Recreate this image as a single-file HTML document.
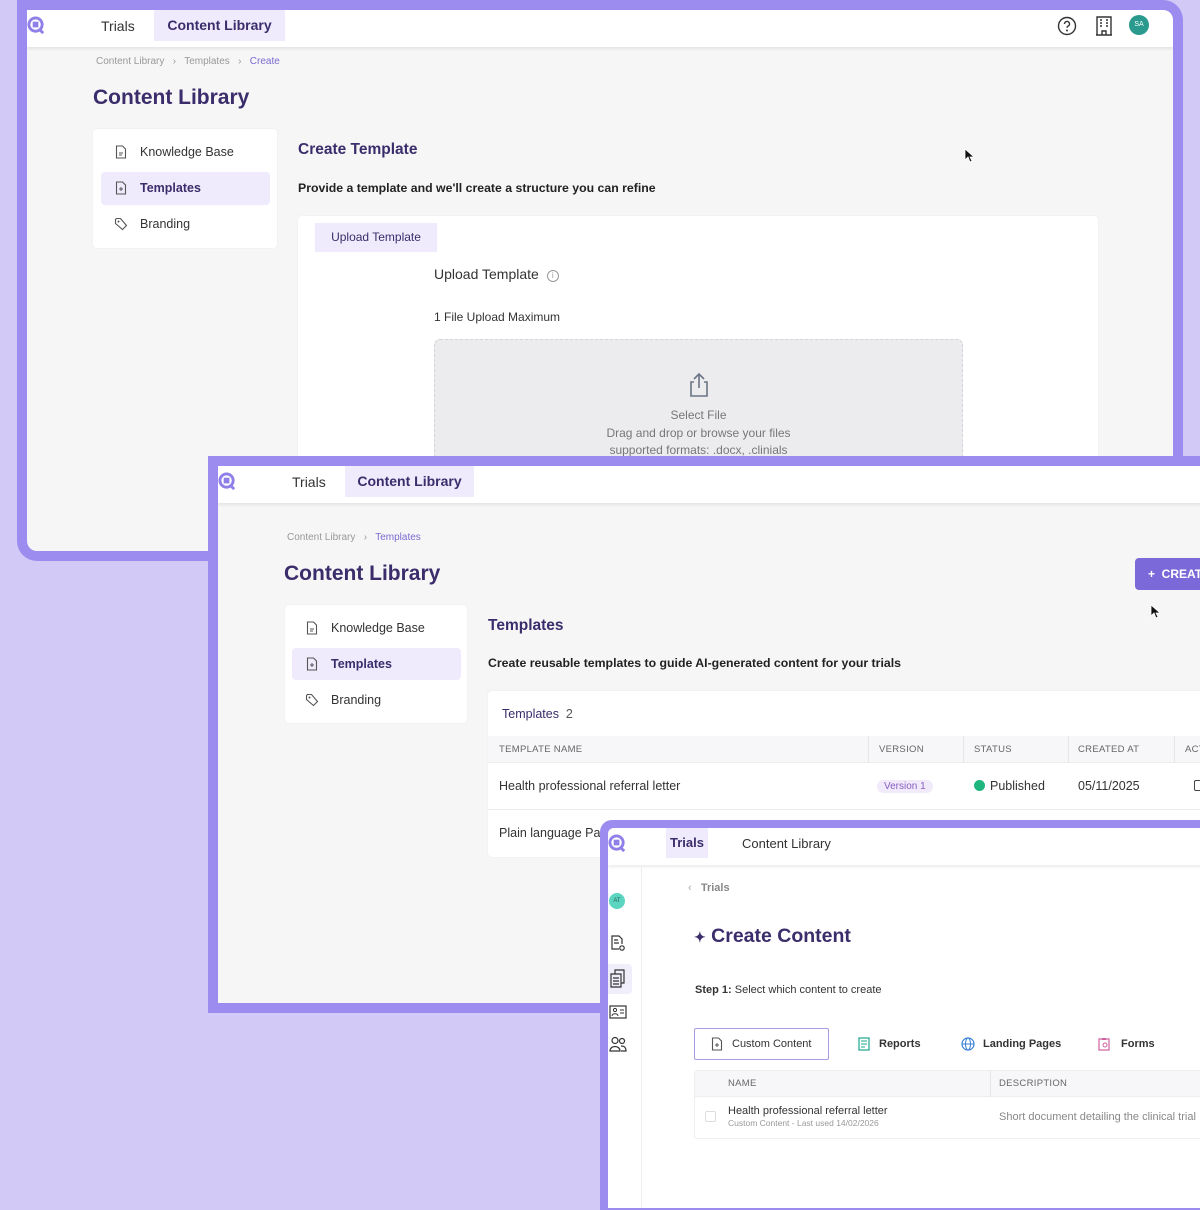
<!DOCTYPE html>
<html><head><meta charset="utf-8"><style>
*{box-sizing:border-box;margin:0;padding:0}
body{width:1200px;height:1200px;overflow:hidden;background:#d2c9f6;font-family:"Liberation Sans",sans-serif;position:relative;color:#333}
.a{position:absolute;white-space:nowrap}
.frame{position:absolute;background:#9c8cf0;overflow:hidden}
.inner{position:absolute;background:#f6f6f7;overflow:hidden}
.nav{position:absolute;left:0;top:0;right:0;height:37px;background:#fff;box-shadow:0 2px 3px rgba(0,0,0,.08)}
.tab{position:absolute;top:0;height:31px;background:#efebfc;color:#3b2d6b;font-weight:bold;font-size:14px;line-height:31px;text-align:center}
.h1{font-size:21px;font-weight:bold;color:#3b2d6b}
.card{position:absolute;background:#fff;border-radius:4px;box-shadow:0 0 2px rgba(0,0,0,.06)}
.side{font-size:12.5px;color:#333}
.sel{position:absolute;background:#efebfc;border-radius:4px}
.bc{font-size:10px;color:#999}
.th{font-size:9.5px;color:#666;letter-spacing:.3px}
</style></head><body>
<svg width="0" height="0" style="position:absolute"><defs>
<symbol id="logo" viewBox="0 0 20 20"><circle cx="9" cy="9" r="7" fill="none" stroke="#8f7fe8" stroke-width="3"/><rect x="6" y="6" width="6" height="6" fill="#8f7fe8"/><path d="M13 14l4 4" stroke="#8f7fe8" stroke-width="3"/></symbol>
<symbol id="doc" viewBox="0 0 12 14"><path d="M1.5 1h6l3 3v9h-9z" fill="none" stroke="#555" stroke-width="1.1"/><path d="M4 8h4M4 10h3" stroke="#555"/></symbol>
<symbol id="docp" viewBox="0 0 12 14"><path d="M1.5 1h6l3 3v9h-9z" fill="none" stroke="#555" stroke-width="1.1"/><path d="M6 6v4M4 8h4" stroke="#555"/></symbol>
<symbol id="tag" viewBox="0 0 14 14"><path d="M1.5 2.5v4l7 6 4-4-6-7h-4z" fill="none" stroke="#555" stroke-width="1.1"/><circle cx="4.5" cy="4.5" r="1" fill="#555"/></symbol>
</defs></svg>

<!-- Window 1 -->
<div class="frame" style="left:17px;top:0;width:1166px;height:561px;border-radius:0 20px 20px 20px"></div>
<div class="inner" style="left:27px;top:10px;width:1146px;height:541px;border-radius:0 10px 10px 10px">
 <div class="nav">
  <svg class="a" style="left:0;top:6px" width="19" height="19"><use href="#logo"/></svg>
  <div class="a" style="left:74px;top:8px;font-size:14px;color:#333">Trials</div>
  <div class="tab" style="left:127px;width:131px">Content Library</div>
  <svg class="a" style="left:1030px;top:6px" width="20" height="20" viewBox="0 0 20 20"><circle cx="10" cy="10" r="8.5" fill="none" stroke="#333" stroke-width="1.4"/><path d="M7.5 8a2.5 2.5 0 1 1 3.3 2.3c-.6.3-.8.7-.8 1.5" fill="none" stroke="#333" stroke-width="1.4"/><circle cx="10" cy="14.5" r="1" fill="#333"/></svg>
  <svg class="a" style="left:1068px;top:6px" width="18" height="20" viewBox="0 0 18 20"><path d="M2 19V1h14v18M1 19h16M7 19v-4h4v4" fill="none" stroke="#333" stroke-width="1.4"/><path d="M5 4h2M11 4h2M5 7h2M11 7h2M5 10h2M11 10h2" stroke="#333" stroke-width="1.4"/></svg>
  <div class="a" style="left:1102px;top:5px;width:20px;height:20px;border-radius:50%;background:#2a9a8e;color:#fff;font-size:7px;text-align:center;line-height:20px">SA</div>
 </div>
 <div class="a bc" style="left:69px;top:46px">Content Library &nbsp;&nbsp;›&nbsp;&nbsp; Templates &nbsp;&nbsp;›&nbsp;&nbsp; <span style="color:#7a6bd0">Create</span></div>
 <div class="a h1" style="left:66px;top:76px">Content Library</div>
 <div class="card" style="left:66px;top:119px;width:184px;height:119px">
  <div class="sel" style="left:8px;top:43px;width:169px;height:33px"></div>
  <svg class="a" style="left:22px;top:16px" width="12" height="14"><use href="#doc"/></svg>
  <div class="a side" style="left:47px;top:16px">Knowledge Base</div>
  <svg class="a" style="left:22px;top:52px" width="12" height="14"><use href="#docp"/></svg>
  <div class="a side" style="left:47px;top:52px;font-weight:bold;color:#3b2d6b">Templates</div>
  <svg class="a" style="left:21px;top:88px" width="14" height="14"><use href="#tag"/></svg>
  <div class="a side" style="left:47px;top:88px">Branding</div>
 </div>
 <div class="a" style="left:271px;top:131px;font-size:15.5px;font-weight:bold;color:#3b2d6b">Create Template</div>
 <div class="a" style="left:271px;top:171px;font-size:12.3px;font-weight:bold;color:#222">Provide a template and we'll create a structure you can refine</div>
 <div class="card" style="left:271px;top:206px;width:800px;height:400px">
  <div class="a" style="left:17px;top:7px;width:122px;height:29px;background:#efebfc;font-size:12px;color:#3b2d6b;line-height:29px;text-align:center">Upload Template</div>
  <div class="a" style="left:136px;top:50px;font-size:14px;color:#333">Upload Template <span style="display:inline-block;width:12px;height:12px;border:1px solid #999;border-radius:50%;font-size:8px;text-align:center;line-height:10px;color:#999;vertical-align:1px;margin-left:4px">i</span></div>
  <div class="a" style="left:136px;top:94px;font-size:12px;color:#333">1 File Upload Maximum</div>
  <div class="a" style="left:136px;top:123px;width:529px;height:200px;background:#ececef;border:1px dashed #d4d4d8;border-radius:6px">
   <svg class="a" style="left:250px;top:32px" width="28" height="26" viewBox="0 0 28 26"><path d="M9 10H6v14h16V10h-3M14 16V2M9 7l5-5 5 5" fill="none" stroke="#6b7585" stroke-width="1.6"/></svg>
   <div class="a" style="left:0;width:527px;top:67px;text-align:center;font-size:12px;color:#777;line-height:17.5px">Select File<br>Drag and drop or browse your files<br>supported formats: .docx, .clinials</div>
  </div>
 </div>
 <svg class="a" style="left:937px;top:138px" width="10" height="15" viewBox="0 0 10 15"><path d="M1 1v11l3-3 2 5 2-1-2-4h4z" fill="#111" stroke="#fff" stroke-width=".8"/></svg>
</div>

<!-- Window 2 -->
<div class="frame" style="left:208px;top:456px;width:1000px;height:557px;border-radius:0"></div>
<div class="inner" style="left:218px;top:466px;width:990px;height:537px">
 <div class="nav">
  <svg class="a" style="left:0;top:6px" width="19" height="19"><use href="#logo"/></svg>
  <div class="a" style="left:74px;top:8px;font-size:14px;color:#333">Trials</div>
  <div class="tab" style="left:127px;width:129px">Content Library</div>
 </div>
 <div class="a bc" style="left:69px;top:66px">Content Library &nbsp;&nbsp;›&nbsp;&nbsp; <span style="color:#7a6bd0">Templates</span></div>
 <div class="a h1" style="left:66px;top:96px">Content Library</div>
 <div class="a" style="left:917px;top:92px;width:90px;height:32px;background:#7b69d9;border-radius:4px;color:#fff;font-size:12px;font-weight:bold;line-height:32px;padding-left:13px">+&nbsp; CREATE</div>
 <svg class="a" style="left:932px;top:138px" width="10" height="15" viewBox="0 0 10 15"><path d="M1 1v11l3-3 2 5 2-1-2-4h4z" fill="#111" stroke="#fff" stroke-width=".8"/></svg>
 <div class="card" style="left:67px;top:139px;width:182px;height:118px">
  <div class="sel" style="left:7px;top:43px;width:169px;height:32px"></div>
  <svg class="a" style="left:21px;top:16px" width="12" height="14"><use href="#doc"/></svg>
  <div class="a side" style="left:46px;top:16px">Knowledge Base</div>
  <svg class="a" style="left:21px;top:52px" width="12" height="14"><use href="#docp"/></svg>
  <div class="a side" style="left:46px;top:52px;font-weight:bold;color:#3b2d6b">Templates</div>
  <svg class="a" style="left:20px;top:88px" width="14" height="14"><use href="#tag"/></svg>
  <div class="a side" style="left:46px;top:88px">Branding</div>
 </div>
 <div class="a" style="left:270px;top:151px;font-size:15.5px;font-weight:bold;color:#3b2d6b">Templates</div>
 <div class="a" style="left:270px;top:190px;font-size:12.3px;font-weight:bold;color:#222">Create reusable templates to guide AI-generated content for your trials</div>
 <div class="card" style="left:270px;top:225px;width:730px;height:166px">
  <div class="a" style="left:14px;top:16px;font-size:12.5px;color:#3b2d6b">Templates &nbsp;<span style="color:#555">2</span></div>
  <div class="a" style="left:0;top:45px;width:730px;height:27px;background:#f7f7fa;border-bottom:1px solid #eee"></div>
  <div class="a th" style="left:11px;top:53px">TEMPLATE NAME</div>
  <div class="a th" style="left:391px;top:53px">VERSION</div>
  <div class="a th" style="left:486px;top:53px">STATUS</div>
  <div class="a th" style="left:590px;top:53px">CREATED AT</div>
  <div class="a th" style="left:697px;top:53px">ACT</div>
  <div class="a" style="left:380px;top:45px;width:1px;height:27px;background:#e6e6ea"></div>
  <div class="a" style="left:475px;top:45px;width:1px;height:27px;background:#e6e6ea"></div>
  <div class="a" style="left:580px;top:45px;width:1px;height:27px;background:#e6e6ea"></div>
  <div class="a" style="left:686px;top:45px;width:1px;height:27px;background:#e6e6ea"></div>
  <div class="a" style="left:11px;top:88px;font-size:12.5px;color:#333">Health professional referral letter</div>
  <div class="a" style="left:389px;top:89px;padding:0 7px;height:13px;line-height:13px;border-radius:7px;background:#f1eafb;color:#8a5fc0;font-size:10px">Version 1</div>
  <div class="a" style="left:486px;top:89px;width:11px;height:11px;border-radius:50%;background:#1fb57f"></div>
  <div class="a" style="left:502px;top:88px;font-size:12.5px;color:#333">Published</div>
  <div class="a" style="left:590px;top:88px;font-size:12.5px;color:#333">05/11/2025</div>
  <div class="a" style="left:706px;top:89px;width:10px;height:11px;border:1px solid #444;border-radius:2px"></div>
  <div class="a" style="left:0;top:118px;width:730px;height:1px;background:#ececef"></div>
  <div class="a" style="left:11px;top:135px;font-size:12.5px;color:#333">Plain language Participant</div>
 </div>
</div>

<!-- Window 3 -->
<div class="frame" style="left:600px;top:820px;width:610px;height:390px;border-radius:12px 0 0 0"></div>
<div class="inner" style="left:608px;top:828px;width:600px;height:380px;background:#fff;border-radius:6px 0 0 0">
 <div class="nav">
  <svg class="a" style="left:0;top:6px" width="19" height="19"><use href="#logo"/></svg>
  <div class="tab" style="left:58px;top:0;width:42px;height:30px;line-height:30px;font-size:13px">Trials</div>
  <div class="a" style="left:134px;top:8px;font-size:13px;color:#333">Content Library</div>
 </div>
 <div class="a" style="left:33px;top:37px;width:1px;height:350px;background:#eee"></div>
 <div class="a" style="left:1px;top:65px;width:16px;height:16px;border-radius:50%;background:#5bd5bf;font-size:6px;color:#2a5f57;text-align:center;line-height:16px">AT</div>
 <svg class="a" style="left:2px;top:107px" width="16" height="18" viewBox="0 0 16 18"><path d="M9 14H2V1h7l3 3v5M4 5h4M4 8h5" fill="none" stroke="#333" stroke-width="1.2"/><circle cx="12" cy="13" r="2.2" fill="none" stroke="#333" stroke-width="1.2"/></svg>
 <div class="a" style="left:0;top:136px;width:24px;height:30px;background:#f1eefc;border-radius:0 4px 4px 0"></div>
 <svg class="a" style="left:2px;top:141px" width="16" height="19" viewBox="0 0 16 19"><path d="M1 5h10v13H1zM5 5V1h9v13h-3M3 9h6M3 12h6M3 15h6" fill="none" stroke="#333" stroke-width="1.2"/></svg>
 <svg class="a" style="left:1px;top:177px" width="18" height="14" viewBox="0 0 18 14"><rect x="1" y="1" width="16" height="12" fill="none" stroke="#333" stroke-width="1.2"/><circle cx="6" cy="5" r="1.6" fill="none" stroke="#333"/><path d="M3 11c0-3 6-3 6 0M11 5h4M11 8h4" fill="none" stroke="#333"/></svg>
 <svg class="a" style="left:1px;top:208px" width="18" height="17" viewBox="0 0 18 17"><circle cx="6" cy="4.5" r="3" fill="none" stroke="#333" stroke-width="1.2"/><circle cx="13" cy="5" r="2.5" fill="none" stroke="#333" stroke-width="1.2"/><path d="M1 15c0-6 10-6 10 0zM12 10c4 0 5 2 5 5h-5" fill="none" stroke="#333" stroke-width="1.2"/></svg>
 <div class="a" style="left:80px;top:54px;font-size:11px;font-weight:bold;color:#888"><span style="color:#aaa;font-weight:normal">‹</span>&nbsp;&nbsp; Trials</div>
 <div class="a" style="left:86px;top:97px;font-size:19.5px;font-weight:bold;color:#3b2d6b"><span style="font-size:14px">✦</span> Create Content</div>
 <div class="a" style="left:87px;top:156px;font-size:11px;color:#333"><b>Step 1:</b> Select which content to create</div>
 <div class="a" style="left:86px;top:200px;width:135px;height:32px;border:1px solid #a89be6;border-radius:2px"></div>
 <svg class="a" style="left:103px;top:209px" width="12" height="14"><use href="#docp"/></svg>
 <div class="a" style="left:124px;top:210px;font-size:11px;color:#333">Custom Content</div>
 <svg class="a" style="left:250px;top:209px" width="12" height="14" viewBox="0 0 12 14"><rect x="1" y="1" width="10" height="12" fill="none" stroke="#1aa58a" stroke-width="1.2"/><path d="M3 4h6M3 7h6M3 10h4" stroke="#1aa58a"/></svg>
 <div class="a" style="left:271px;top:210px;font-size:11px;color:#333;font-weight:bold">Reports</div>
 <svg class="a" style="left:353px;top:209px" width="14" height="14" viewBox="0 0 14 14"><circle cx="7" cy="7" r="6" fill="none" stroke="#3a7fd6" stroke-width="1.2"/><ellipse cx="7" cy="7" rx="2.5" ry="6" fill="none" stroke="#3a7fd6"/><path d="M1 7h12" stroke="#3a7fd6"/></svg>
 <div class="a" style="left:375px;top:210px;font-size:11px;color:#333;font-weight:bold">Landing Pages</div>
 <svg class="a" style="left:490px;top:209px" width="13" height="14" viewBox="0 0 13 14"><rect x="1" y="2" width="10" height="11" fill="none" stroke="#d0609f" stroke-width="1.2"/><rect x="4" y="1" width="4" height="2" fill="#d0609f"/><circle cx="7" cy="8" r="2" fill="none" stroke="#d0609f"/></svg>
 <div class="a" style="left:513px;top:210px;font-size:11px;color:#333;font-weight:bold">Forms</div>
 <div class="a" style="left:86px;top:242px;width:520px;height:69px;border:1px solid #eee;border-radius:3px"></div>
 <div class="a" style="left:87px;top:243px;width:520px;height:26px;background:#f7f7fa;border-bottom:1px solid #eee"></div>
 <div class="a th" style="left:120px;top:250px">NAME</div>
 <div class="a" style="left:382px;top:243px;width:1px;height:26px;background:#e6e6ea"></div>
 <div class="a th" style="left:391px;top:250px">DESCRIPTION</div>
 <div class="a" style="left:97px;top:283px;width:11px;height:11px;border:1px solid #ddd;border-radius:2px"></div>
 <div class="a" style="left:120px;top:277px;font-size:11px;color:#333">Health professional referral letter</div>
 <div class="a" style="left:120px;top:290px;font-size:8.5px;color:#999">Custom Content - Last used 14/02/2026</div>
 <div class="a" style="left:391px;top:283px;font-size:11px;color:#888">Short document detailing the clinical trial</div>
</div>
</body></html>
